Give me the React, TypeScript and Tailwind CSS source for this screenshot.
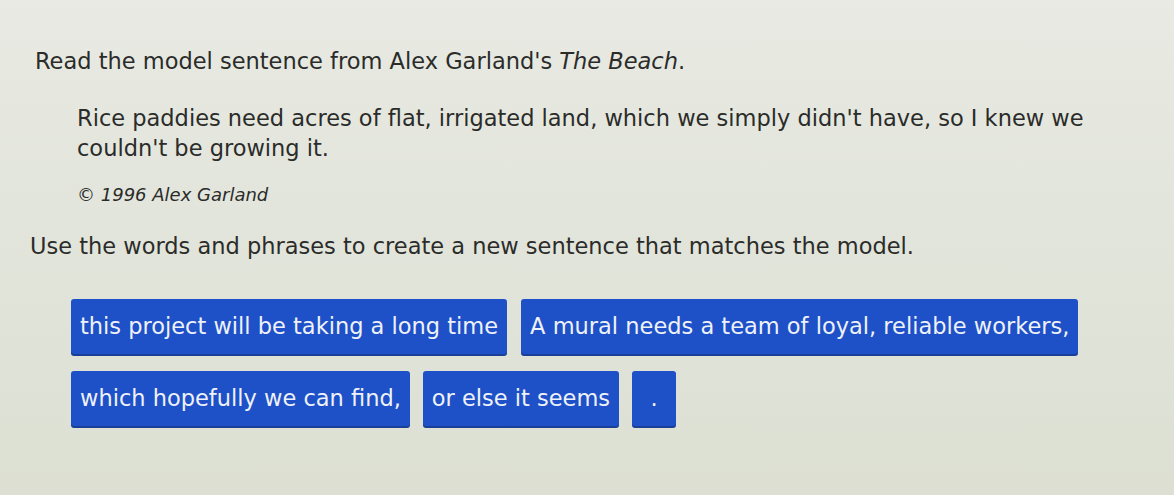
import React from 'react';

const rowOne = ['this project will be taking a long time', 'A mural needs a team of loyal, reliable workers,'];
const rowTwo = ['which hopefully we can find,', 'or else it seems', '.'];

const Tile = ({ text }: { text: string }) => (
  <button
    type="button"
    className="h-[55px] min-w-[44px] rounded-[3px] bg-[#1e50c8] px-[9px] text-[22.5px] leading-none text-[#eef2f8] shadow-[0_2px_0_#1a3f96]"
  >
    {text}
  </button>
);

export default function App() {
  return (
    <div
      className="h-[495px] w-[1174px] overflow-hidden bg-gradient-to-b from-[#e8eae3] to-[#dcdfd2] text-[#2b2c2a]"
      style={{ fontFamily: '"DejaVu Sans", Verdana, sans-serif' }}
    >
      <div className="pl-[35px] pt-[46px]">
        <p className="text-[22.5px] leading-[30px]">
          Read the model sentence from Alex Garland's <i>The Beach</i>.
        </p>

        <div className="pl-[42px] pt-[27px]">
          <p className="w-[1040px] text-[22.5px] leading-[30px]">
            Rice paddies need acres of flat, irrigated land, which we simply didn't have, so I knew we couldn't be growing it.
          </p>
          <p className="pt-[19px] text-[18px] italic leading-[26px]">© 1996 Alex Garland</p>
        </div>
      </div>

      <p className="pl-[30px] pt-[23px] text-[22.5px] leading-[30px]">
        Use the words and phrases to create a new sentence that matches the model.
      </p>

      <div className="flex flex-col gap-[17px] pl-[71px] pt-[38px]">
        <div className="flex gap-[14px]">
          {rowOne.map(t => <Tile key={t} text={t} />)}
        </div>
        <div className="flex gap-[13px]">
          {rowTwo.map(t => <Tile key={t} text={t} />)}
        </div>
      </div>
    </div>
  );
}
